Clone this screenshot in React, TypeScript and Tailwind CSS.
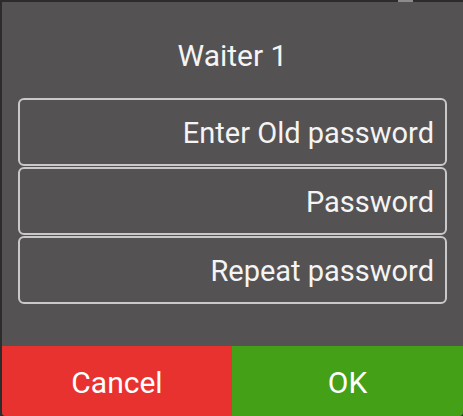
import React from "react";

const font = { fontFamily: "Roboto, 'Noto Sans', sans-serif" };

function Field({ label }: { label: string }) {
  return (
    <div className="h-[68px] rounded-[6px] border-2 border-[#c9c9c9] flex items-center justify-end pr-[11px] pt-[2px]">
      <span className="text-[29px] leading-none text-[#f4f4f4]">{label}</span>
    </div>
  );
}

export default function App() {
  return (
    <div className="relative w-[463px] h-[416px] bg-[#2c2c2c] pl-[2px] pt-[2px]" style={font}>
      <div className="absolute top-0 left-[398px] w-[15px] h-[2px] bg-[#8c8c8c]" />
      <div className="h-full flex flex-col bg-[#545253] rounded-b-[4px] overflow-hidden">
        <div className="h-[96px] flex items-center justify-center pt-[12px]">
          <span className="text-[30px] leading-none text-[#f4f4f4]">Waiter 1</span>
        </div>
        <div className="flex flex-col gap-[1px] px-[16px]">
          <Field label="Enter Old password" />
          <Field label="Password" />
          <Field label="Repeat password" />
        </div>
        <div className="flex-1" />
        <div className="flex h-[70px]">
          <div className="w-[230px] bg-[#e8322f] flex items-center justify-center pt-[4px]">
            <span className="text-[30px] leading-none text-white">Cancel</span>
          </div>
          <div className="flex-1 bg-[#44a016] flex items-center justify-center pt-[4px]">
            <span className="text-[30px] leading-none text-white">OK</span>
          </div>
        </div>
      </div>
    </div>
  );
}
